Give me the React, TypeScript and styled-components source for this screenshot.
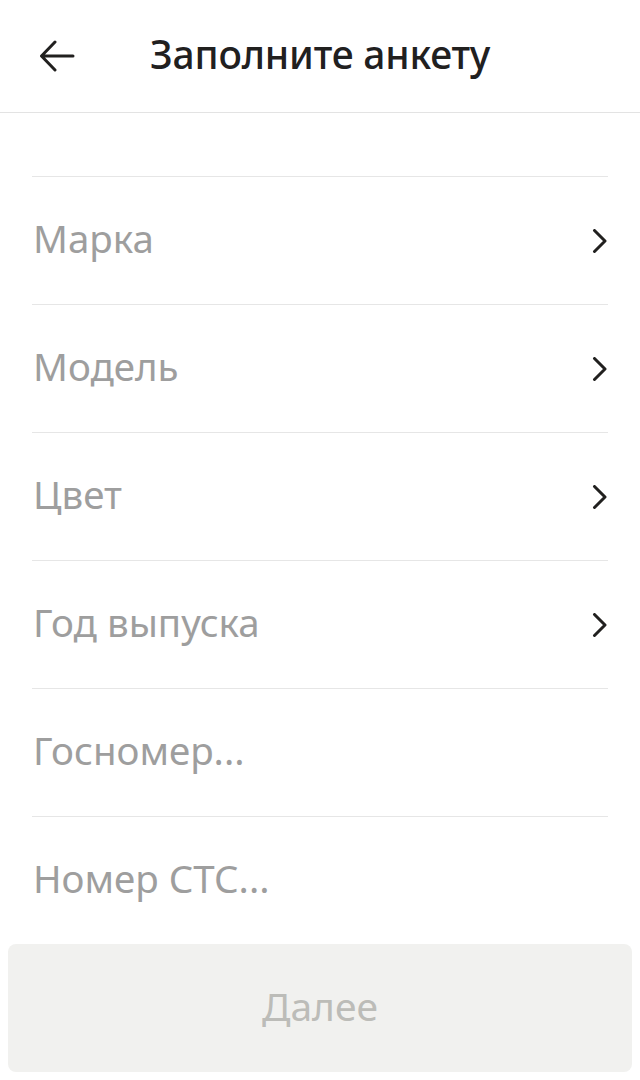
import React from "react";
import styled, { createGlobalStyle } from "styled-components";

const Global = createGlobalStyle`
  html, body { margin: 0; padding: 0; background: #ffffff; }
  body { font-family: "Noto Sans", "Open Sans", sans-serif; -webkit-font-smoothing: antialiased; }
`;

const Page = styled.div`
  width: 640px;
  min-height: 1080px;
  display: flex;
  flex-direction: column;
  background: #fff;
`;

const Header = styled.header`
  height: 112px;
  display: flex;
  align-items: center;
  border-bottom: 1px solid #e3e3e3;
  padding: 0 0 0 38px;
  box-sizing: content-box;
`;

const BackButton = styled.button`
  width: 38px;
  height: 38px;
  padding: 0;
  border: 0;
  background: none;
  display: flex;
  align-items: center;
  justify-content: center;
  color: #21201f;
  margin-right: 74px;
`;

const Title = styled.h1`
  margin: 0 0 4px;
  font-family: "Noto Sans", sans-serif;
  font-size: 39px;
  line-height: 1.2;
  font-weight: 500;
  color: #21201f;
  letter-spacing: -0.2px;
`;

const List = styled.div`
  padding: 63px 32px 0;
  display: flex;
  flex-direction: column;
`;

const Row = styled.div`
  height: 128px;
  box-sizing: border-box;
  border-top: 1px solid #e6e6e6;
  display: flex;
  align-items: center;
  justify-content: space-between;
`;

const Label = styled.span`
  font-family: "Noto Sans", sans-serif;
  font-size: 38.5px;
  line-height: 1.2;
  color: #9e9e9e;
  margin: 0 0 4px 1px;
`;

const Footer = styled.div`
  padding: 0 8px;
`;

const NextButton = styled.button`
  width: 100%;
  height: 128px;
  border: 0;
  border-radius: 8px;
  background: #f1f1ef;
  color: #bcbcb8;
  font-family: "Noto Sans", sans-serif;
  font-size: 39px;
  line-height: 1.2;
  padding: 0 0 4px;
`;

const Chevron = () => (
  <svg width="16" height="24" viewBox="0 0 16 24" fill="none">
    <path d="M2.5 1.5 L13 12 L2.5 22.5" stroke="#21201f" strokeWidth="3" strokeLinecap="round" strokeLinejoin="round" />
  </svg>
);

const BackArrow = () => (
  <svg width="36" height="32" viewBox="0 0 36 32" fill="none">
    <path d="M34 16 H4 M16 2 L2.5 16 L16 30" stroke="#21201f" strokeWidth="3" strokeLinecap="round" strokeLinejoin="round" />
  </svg>
);

const rows: { label: string; arrow: boolean }[] = [
  { label: "Марка", arrow: true },
  { label: "Модель", arrow: true },
  { label: "Цвет", arrow: true },
  { label: "Год выпуска", arrow: true },
  { label: "Госномер...", arrow: false },
  { label: "Номер СТС...", arrow: false },
];

export default function App() {
  return (
    <Page>
      <Global />
      <Header>
        <BackButton aria-label="Назад">
          <BackArrow />
        </BackButton>
        <Title>Заполните анкету</Title>
      </Header>
      <List>
        {rows.map((r) => (
          <Row key={r.label}>
            <Label>{r.label}</Label>
            {r.arrow && <Chevron />}
          </Row>
        ))}
      </List>
      <Footer>
        <NextButton>Далее</NextButton>
      </Footer>
    </Page>
  );
}
